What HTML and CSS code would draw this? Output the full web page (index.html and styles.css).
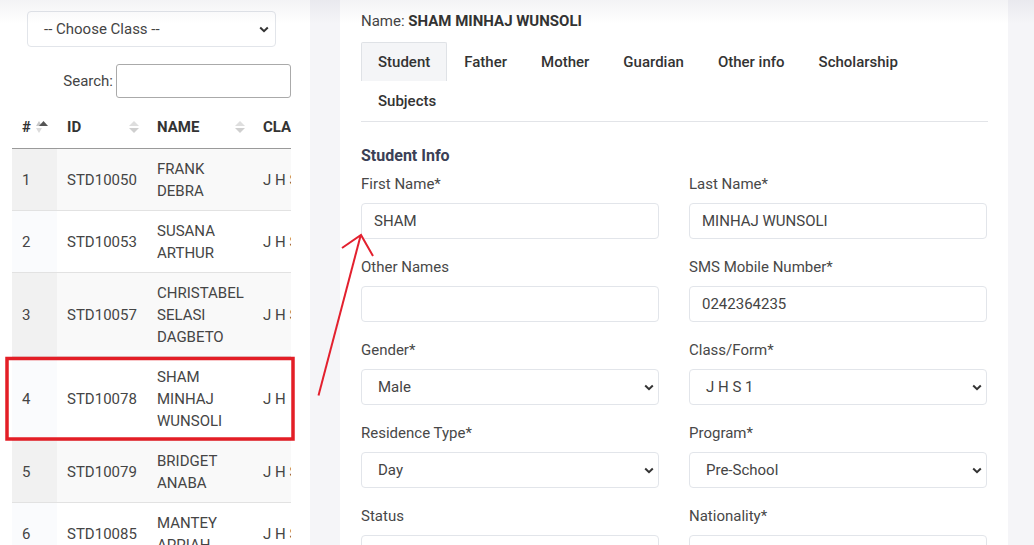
FILE: index.html
```html
<!DOCTYPE html>
<html lang="en">
<head>
<meta charset="utf-8">
<title>Student</title>
<link rel="stylesheet" href="styles.css">
</head>
<body>
<div class="page">
  <aside class="card left">
    <div class="fake-select class-select">
      <span>-- Choose Class --</span>
      <svg class="chev" width="10" height="7" viewBox="0 0 10 7"><path d="M1.2 1.5 L5 5.2 L8.8 1.5" fill="none" stroke="#333" stroke-width="2"/></svg>
    </div>
    <div class="search-row">
      <label class="search-label">Search:</label>
      <div class="search-input"></div>
    </div>
    <div class="table-wrap">
      <table class="dt">
        <colgroup><col class="c1"><col class="c2"><col class="c3"><col class="c4"></colgroup>
        <thead>
          <tr>
            <th><div class="th-in"><span>#</span>
              <svg class="sort" width="16" height="14" viewBox="0 0 16 14"><path d="M1 6 L4 1 L7 6 Z" fill="#c8c8c8"/><path d="M1 8 L4 13 L7 8 Z" fill="#dcdcdc"/><path d="M4 6 L8.5 1 L13 6 Z" fill="#555"/></svg></div></th>
            <th><div class="th-in"><span>ID</span>
              <svg class="sort" width="14" height="14" viewBox="0 0 14 14"><path d="M2 6 L7 1 L12 6 Z" fill="#dedede"/><path d="M2 8 L7 13 L12 8 Z" fill="#cfcfcf"/></svg></div></th>
            <th><div class="th-in"><span>NAME</span>
              <svg class="sort" width="14" height="14" viewBox="0 0 14 14"><path d="M2 6 L7 1 L12 6 Z" fill="#dedede"/><path d="M2 8 L7 13 L12 8 Z" fill="#cfcfcf"/></svg></div></th>
            <th><div class="th-in"><span>CLASS</span></div></th>
          </tr>
        </thead>
        <tbody>
          <tr class="odd"><td class="s1">1</td><td>STD10050</td><td>FRANK<br>DEBRA</td><td>J H S 1</td></tr>
          <tr class="even"><td class="s1">2</td><td>STD10053</td><td>SUSANA<br>ARTHUR</td><td>J H S 1</td></tr>
          <tr class="odd"><td class="s1">3</td><td>STD10057</td><td>CHRISTABEL<br>SELASI<br>DAGBETO</td><td>J H S 1</td></tr>
          <tr class="even"><td class="s1">4</td><td>STD10078</td><td>SHAM<br>MINHAJ<br>WUNSOLI</td><td>J H</td></tr>
          <tr class="odd"><td class="s1">5</td><td>STD10079</td><td>BRIDGET<br>ANABA</td><td>J H S 1</td></tr>
          <tr class="even"><td class="s1">6</td><td>STD10085</td><td>MANTEY<br>APPIAH</td><td>J H S 1</td></tr>
        </tbody>
      </table>
    </div>
  </aside>

  <main class="card right">
    <div class="name-line">Name: <b>SHAM MINHAJ WUNSOLI</b></div>
    <ul class="tabs">
      <li class="tab active">Student</li>
      <li class="tab">Father</li>
      <li class="tab">Mother</li>
      <li class="tab">Guardian</li>
      <li class="tab">Other info</li>
      <li class="tab">Scholarship</li>
      <li class="tab">Subjects</li>
    </ul>
    <h3 class="section-title">Student Info</h3>
    <div class="form-grid">
      <div class="field"><label>First Name*</label><div class="input">SHAM</div></div>
      <div class="field"><label>Last Name*</label><div class="input">MINHAJ WUNSOLI</div></div>
      <div class="field"><label>Other Names</label><div class="input"></div></div>
      <div class="field"><label>SMS Mobile Number*</label><div class="input">0242364235</div></div>
      <div class="field"><label>Gender*</label><div class="fake-select"><span>Male</span><svg class="chev" width="10" height="7" viewBox="0 0 10 7"><path d="M1.2 1.5 L5 5.2 L8.8 1.5" fill="none" stroke="#333" stroke-width="2"/></svg></div></div>
      <div class="field"><label>Class/Form*</label><div class="fake-select"><span>J H S 1</span><svg class="chev" width="10" height="7" viewBox="0 0 10 7"><path d="M1.2 1.5 L5 5.2 L8.8 1.5" fill="none" stroke="#333" stroke-width="2"/></svg></div></div>
      <div class="field"><label>Residence Type*</label><div class="fake-select"><span>Day</span><svg class="chev" width="10" height="7" viewBox="0 0 10 7"><path d="M1.2 1.5 L5 5.2 L8.8 1.5" fill="none" stroke="#333" stroke-width="2"/></svg></div></div>
      <div class="field"><label>Program*</label><div class="fake-select"><span>Pre-School</span><svg class="chev" width="10" height="7" viewBox="0 0 10 7"><path d="M1.2 1.5 L5 5.2 L8.8 1.5" fill="none" stroke="#333" stroke-width="2"/></svg></div></div>
      <div class="field"><label>Status</label><div class="input"></div></div>
      <div class="field"><label>Nationality*</label><div class="input"></div></div>
    </div>
  </main>
</div>

<div class="top-shade"></div>
<svg class="annot" width="1034" height="545" viewBox="0 0 1034 545">
  <rect x="7" y="358.5" width="286" height="80.5" fill="none" stroke="#e31e26" stroke-width="3.5"/>
  <path d="M318.5 395.5 L360.5 236" fill="none" stroke="#e3202e" stroke-width="2"/>
  <path d="M342 248 L361 235 L373 256" fill="none" stroke="#e3202e" stroke-width="2"/>
</svg>
</body>
</html>
```

FILE: styles.css
```css
* { box-sizing: border-box; }
html, body { margin: 0; padding: 0; }
body {
  width: 1034px;
  height: 545px;
  overflow: hidden;
  background: #f5f5f8;
  font-family: Roboto, "Liberation Sans", Arial, sans-serif;
  font-size: 15px;
  color: #444;
  position: relative;
}
.page {
  display: flex;
  gap: 30px;
  align-items: flex-start;
  height: 545px;
}
.card { background: #fff; height: 100%; }
.left {
  width: 310px;
  padding: 11px 19px 0 12px;
  overflow: hidden;
}
.right {
  width: 668px;
  padding: 11px 20px 0 21px;
}

/* left */
.fake-select {
  height: 36px;
  border: 1px solid #e2e5ea;
  border-radius: 4px;
  display: flex;
  align-items: center;
  justify-content: space-between;
  padding: 0 4px 0 16px;
  color: #444;
  background: #fff;
}
.class-select { margin: 0 15px; padding-right: 6px; }
.chev { display: block; }
.search-row {
  display: flex;
  justify-content: flex-end;
  align-items: center;
  gap: 3px;
  margin-top: 17px;
}
.search-label { color: #444; }
.search-input {
  width: 175px;
  height: 34px;
  border: 1px solid #aaa;
  border-radius: 3px;
}
.table-wrap {
  margin-top: 12px;
  width: 279px;
  overflow: hidden;
}
.dt {
  table-layout: fixed;
  width: 361px;
  border-collapse: collapse;
}
.c1 { width: 45px; }
.c2 { width: 90px; }
.c3 { width: 106px; }
.c4 { width: 120px; }
.dt th {
  text-align: left;
  font-weight: 700;
  color: #333;
  padding: 6px 6px 9px 10px;
  height: 38px;
  border-bottom: 1px solid #9a9a9a;
}
.th-in { display: flex; align-items: center; }
.th-in .sort { margin-left: auto; }
.dt td {
  padding: 9px 10px 8px;
  line-height: 22px;
  vertical-align: middle;
  color: #454545;
  border-top: 1px solid #e2e2e2;
  white-space: nowrap;
}
.dt tbody tr:first-child td { border-top: 0; }
.dt tr.odd td { background: #f9f9f9; }
.dt tr.odd td.s1 { background: #f1f1f1; }
.dt tr.even td.s1 { background: #fafbfd; }

/* right */
.name-line { line-height: 20px; color: #444; }
.name-line b { color: #333; }
.tabs {
  list-style: none;
  margin: 11px 0 0;
  padding: 0 0 1px;
  display: flex;
  flex-wrap: wrap;
  border-bottom: 1px solid #e2e4e8;
}
.tab {
  padding: 9px 16px 8px;
  line-height: 20px;
  font-weight: 500;
  color: #333;
  border: 1px solid transparent;
  border-bottom: 0;
  height: 39px;
}
.tab.active {
  background: #f4f5f7;
  border-color: #dfe2e6;
  border-radius: 2px 2px 0 0;
}
.section-title {
  margin: 23px 0 7px;
  font-size: 16px;
  line-height: 22px;
  font-weight: 700;
  color: #3b4056;
}
.form-grid {
  display: grid;
  grid-template-columns: 298px 298px;
  column-gap: 30px;
}
.field { margin-bottom: 18px; }
.field label {
  display: block;
  line-height: 21px;
  margin-bottom: 8px;
  color: #484848;
}
.input {
  height: 36px;
  border: 1px solid #e2e5ea;
  border-radius: 4px;
  padding: 0 12px;
  display: flex;
  align-items: center;
  color: #444;
}

.top-shade {
  position: absolute;
  left: 0; top: 0;
  width: 100%;
  height: 24px;
  background: linear-gradient(to bottom, rgba(20, 20, 60, 0.05), rgba(20, 20, 60, 0));
  pointer-events: none;
}
.annot {
  position: absolute;
  left: 0; top: 0;
  pointer-events: none;
}
```
